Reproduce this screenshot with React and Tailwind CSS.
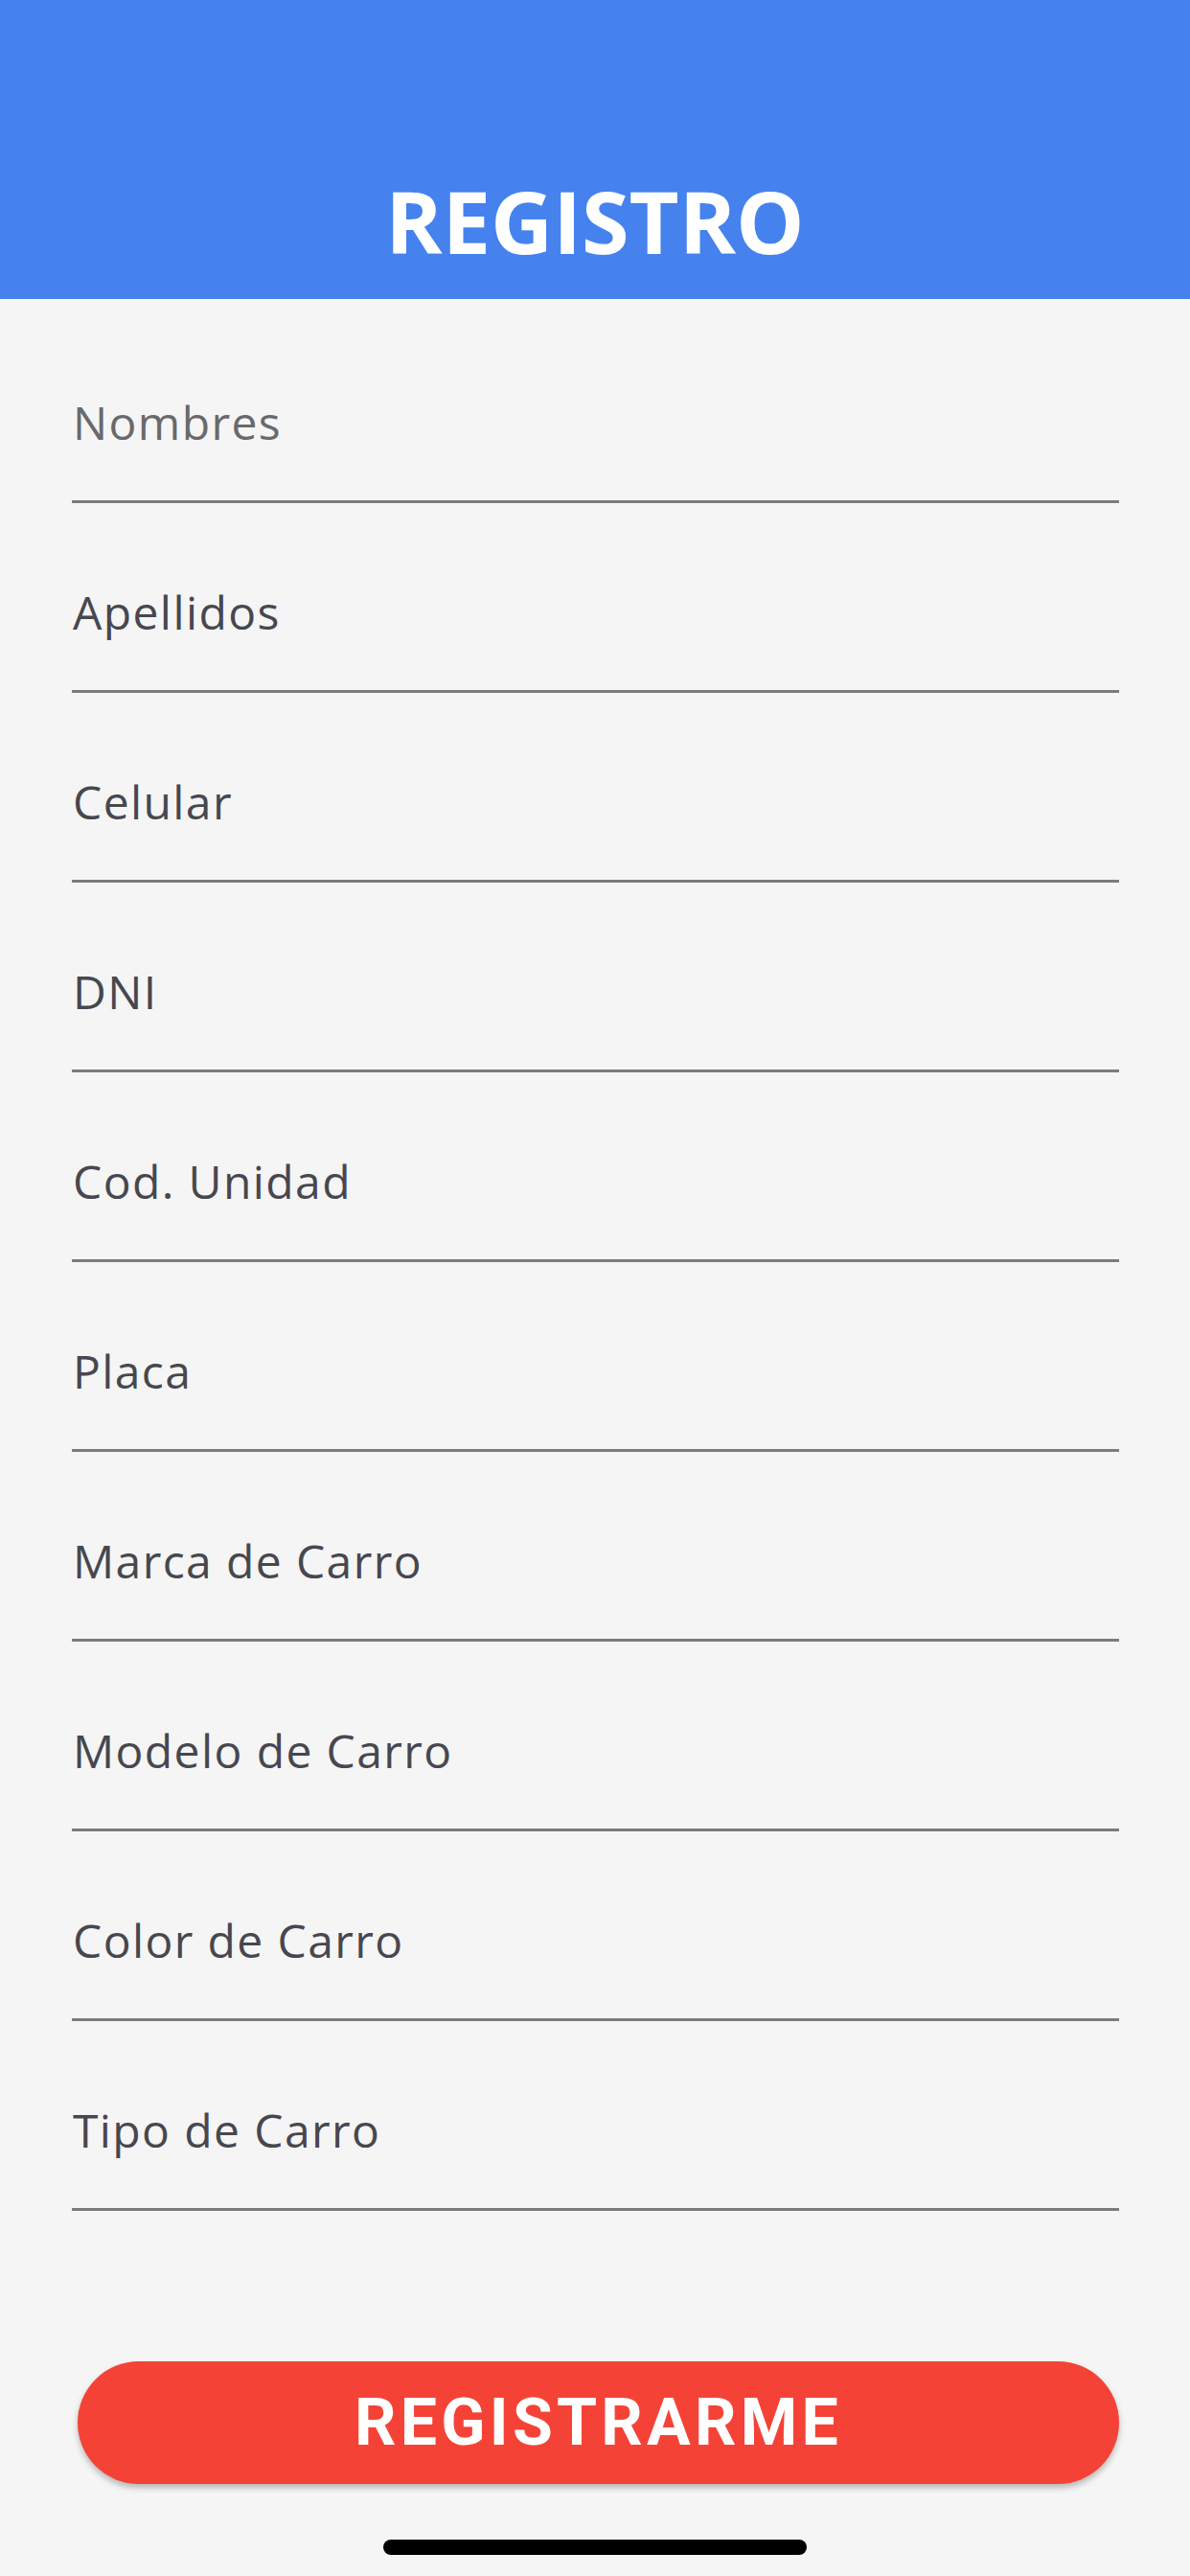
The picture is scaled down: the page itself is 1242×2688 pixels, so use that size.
import React from 'react';

const fields = [
  'Nombres',
  'Apellidos',
  'Celular',
  'DNI',
  'Cod. Unidad',
  'Placa',
  'Marca de Carro',
  'Modelo de Carro',
  'Color de Carro',
  'Tipo de Carro',
];

const Field = ({ label, first }) => (
  <div className="h-[198px] flex items-end pb-[48px] border-b-[3px] border-[#7b7b7f]">
    <span
      className={`text-[48px] leading-[66px] tracking-[1.4px] pl-[1px] ${first ? 'text-[#69696b]' : 'text-[#47474f]'}`}
    >
      {label}
    </span>
  </div>
);

export default function App() {
  return (
    <div className="w-[1242px] h-[2688px] bg-[#f5f5f5] flex flex-col font-['Open_Sans',sans-serif]">
      <header className="h-[312px] bg-[#4582ee] flex items-end justify-center pb-[37px]">
        <h1 className="text-white font-bold text-[90px] leading-[90px]">REGISTRO</h1>
      </header>

      <form className="ml-[75px] mr-[74px] pt-[15px] flex flex-col">
        {fields.map((f, i) => (
          <Field key={f} label={f} first={i === 0} />
        ))}
      </form>

      <div className="pl-[81px] pr-[74px] pt-[157px]">
        <button
          type="button"
          className="w-full h-[128px] rounded-full bg-[#f44336] shadow-[0_4px_6px_rgba(0,0,0,0.25)] flex items-center justify-center"
        >
          <span className="text-white font-['Roboto',sans-serif] font-bold text-[68px] leading-none tracking-[4.2px]">
            REGISTRARME
          </span>
        </button>
      </div>

      <div className="flex justify-center pt-[58px]">
        <div className="w-[442px] h-[16px] rounded-full bg-black" />
      </div>
    </div>
  );
}
